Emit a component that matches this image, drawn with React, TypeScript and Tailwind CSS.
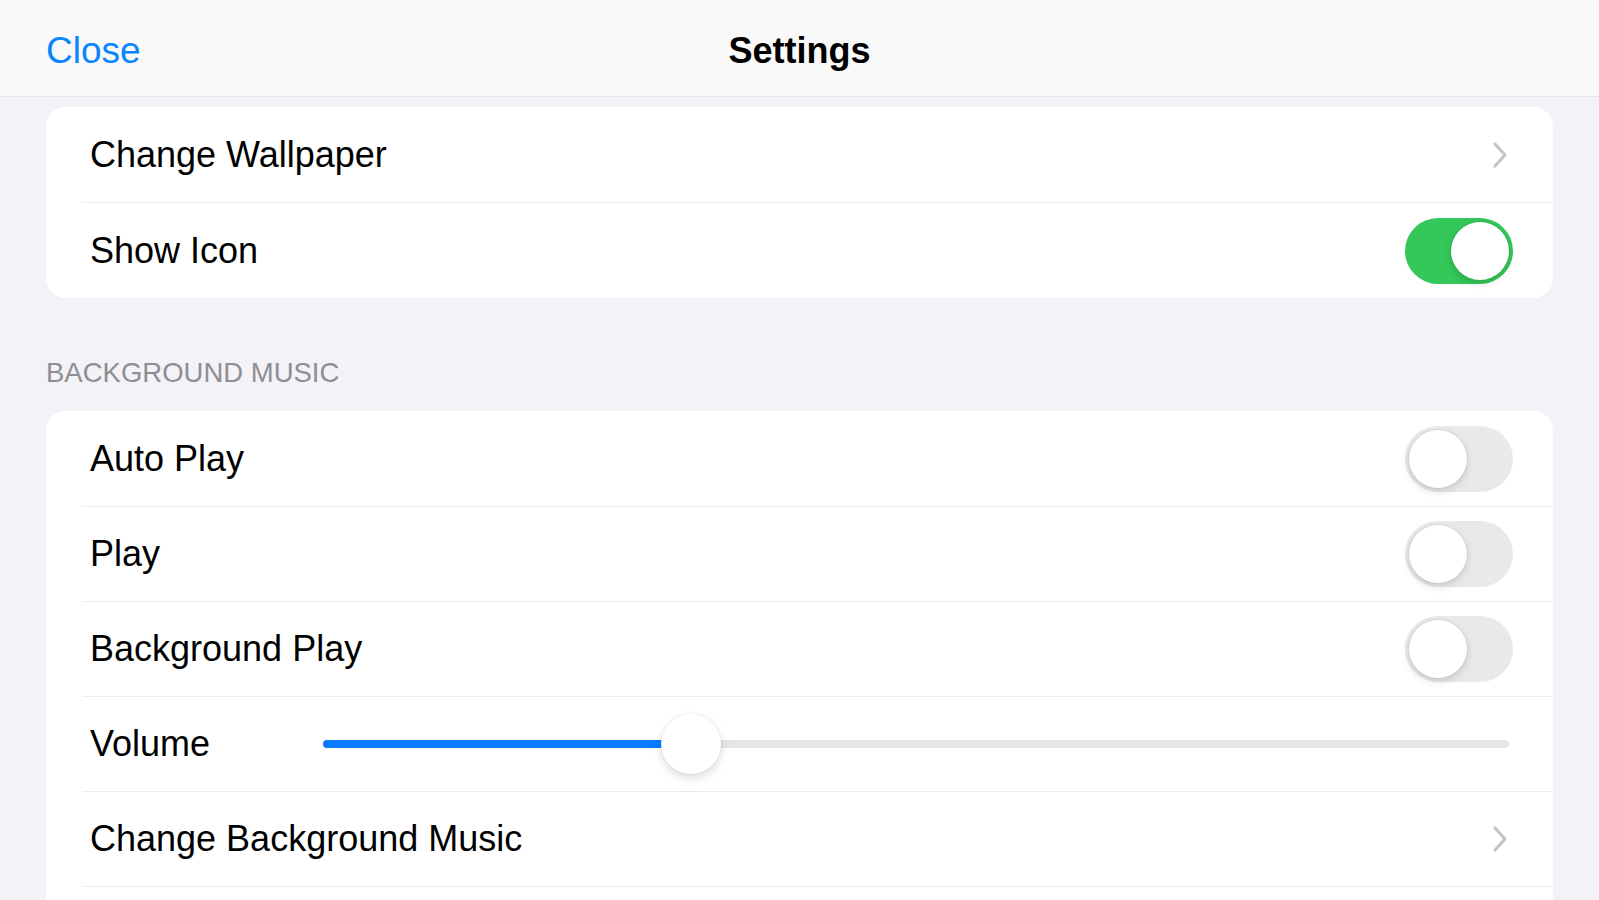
import { useState } from "react";

const FONT = "font-['Liberation_Sans','Helvetica_Neue',Arial,sans-serif]";

function Chevron() {
  return (
    <svg width="18" height="28" viewBox="0 0 18 28" fill="none" className="shrink-0">
      <path
        d="M4 3 L14 14 L4 25"
        stroke="#c4c4c7"
        strokeWidth="3.2"
        strokeLinecap="round"
        strokeLinejoin="round"
      />
    </svg>
  );
}

function Toggle({ on, onClick }: { on: boolean; onClick: () => void }) {
  return (
    <button
      type="button"
      onClick={onClick}
      className={`relative h-[66px] w-[108px] shrink-0 rounded-full transition-colors ${
        on ? "bg-[#34c759]" : "bg-[#e9e9eb]"
      }`}
    >
      {/* knob */}
      <span
        className={`absolute top-[4px] h-[58px] w-[58px] rounded-full bg-white shadow-[0_3px_8px_rgba(0,0,0,0.15),0_0_0_1px_rgba(0,0,0,0.04)] transition-all ${
          on ? "left-[46px]" : "left-[4px]"
        }`}
      />
    </button>
  );
}

function Row({
  label,
  last = false,
  children,
}: {
  label: string;
  last?: boolean;
  children?: React.ReactNode;
}) {
  return (
    <div className={`ml-[36px] ${last ? "" : "border-b border-[#ececf0]"}`}>
      <div className="flex h-[94px] items-center justify-between pl-[8px] pr-[40px]">
        <span className="text-[36px] text-black">{label}</span>
        {children}
      </div>
    </div>
  );
}

function VolumeSlider({ value }: { value: number }) {
  return (
    <div className="relative h-[60px] flex-1">
      <div className="absolute left-0 right-0 top-[26px] h-[8px] rounded-full bg-[#e5e5ea]" />
      <div
        className="absolute left-0 top-[26px] h-[8px] rounded-full bg-[#0a7aff]"
        style={{ width: `${value * 100}%` }}
      />
      <div
        className="absolute top-0 h-[60px] w-[60px] -translate-x-1/2 rounded-full bg-white shadow-[0_4px_10px_rgba(0,0,0,0.14),0_0_0_1px_rgba(0,0,0,0.03)]"
        style={{ left: `${value * 100}%` }}
      />
    </div>
  );
}

export default function App() {
  const [showIcon, setShowIcon] = useState(true);
  const [autoPlay, setAutoPlay] = useState(false);
  const [play, setPlay] = useState(false);
  const [bgPlay, setBgPlay] = useState(false);

  return (
    <div className={`${FONT} h-[900px] w-full overflow-hidden bg-[#f2f2f7]`}>
      {/* nav bar */}
      <div className="relative flex h-[97px] items-center justify-center border-b border-[#e4e4e8] bg-[#f9f9f9] pt-[5px]">
        <button className="absolute left-[46px] top-[28px] text-[37px] leading-[46px] text-[#0a84ff]">
          Close
        </button>
        <span className="text-[36px] font-bold text-black">Settings</span>
      </div>

      <div className="px-[46px] pt-[10px]">
        <div className="overflow-hidden rounded-[20px] bg-white">
          <div className="ml-[36px] border-b border-[#ececf0]">
            <div className="flex h-[95px] items-center justify-between pl-[8px] pr-[44px]">
              <span className="text-[36px] text-black">Change Wallpaper</span>
              <Chevron />
            </div>
          </div>
          <div className="ml-[36px]">
            <div className="flex h-[95px] items-center justify-between pl-[8px] pr-[40px]">
              <span className="text-[36px] text-black">Show Icon</span>
              <Toggle on={showIcon} onClick={() => setShowIcon(!showIcon)} />
            </div>
          </div>
        </div>

        <div className="mb-[22px] mt-[59px] text-[27.5px] leading-[32px] text-[#8e8e93]">
          BACKGROUND MUSIC
        </div>

        <div className="overflow-hidden rounded-t-[20px] bg-white">
          <div className="h-px" />
          <Row label="Auto Play">
            <Toggle on={autoPlay} onClick={() => setAutoPlay(!autoPlay)} />
          </Row>
          <Row label="Play">
            <Toggle on={play} onClick={() => setPlay(!play)} />
          </Row>
          <Row label="Background Play">
            <Toggle on={bgPlay} onClick={() => setBgPlay(!bgPlay)} />
          </Row>
          <div className="ml-[36px] border-b border-[#ececf0]">
            <div className="flex h-[94px] items-center pl-[8px] pr-[44px]">
              <span className="w-[233px] shrink-0 text-[36px] text-black">Volume</span>
              <VolumeSlider value={0.31} />
            </div>
          </div>
          <div className="ml-[36px] border-b border-[#ececf0]">
            <div className="flex h-[94px] items-center justify-between pl-[8px] pr-[44px]">
              <span className="text-[36px] text-black">Change Background Music</span>
              <Chevron />
            </div>
          </div>
          <div className="h-[95px]" />
        </div>
      </div>
    </div>
  );
}
